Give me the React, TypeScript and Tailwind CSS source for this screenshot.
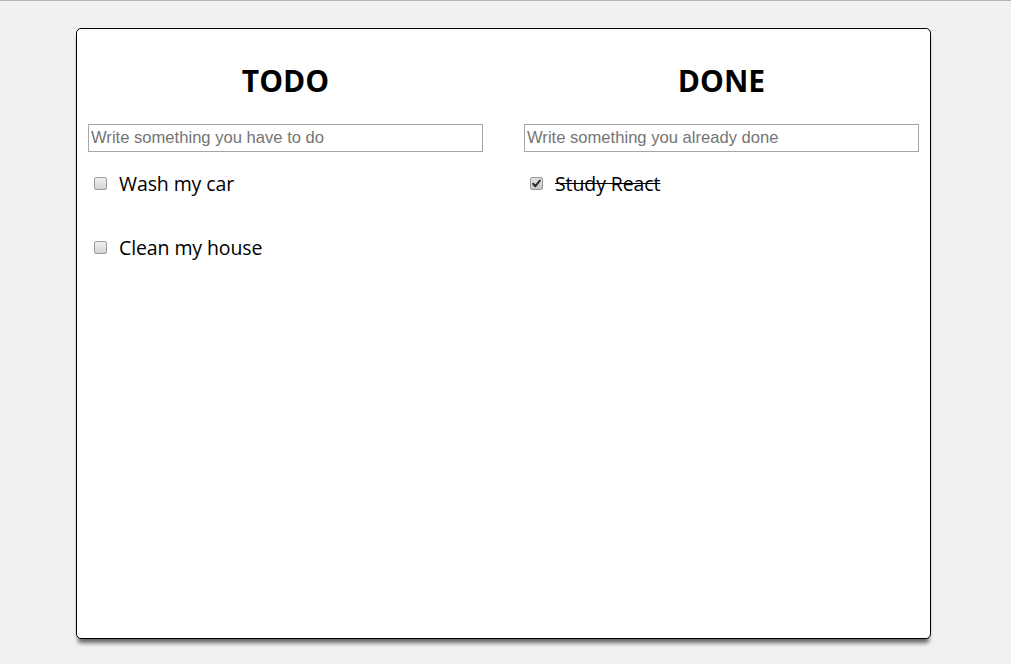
import { useState } from 'react';

type Item = { text: string; done: boolean };

function Checkbox({ checked }: { checked: boolean }) {
  return (
    <span className="relative ml-[6px] -mt-[1px] w-[13px] h-[13px] shrink-0">
      <input
        type="checkbox"
        readOnly
        checked={checked}
        className="appearance-none block w-[13px] h-[13px] rounded-[2px] border border-[#9a9a9a] bg-gradient-to-b from-[#f0f0f0] to-[#d4d4d4] checked:from-[#e2e2e2] checked:to-[#c8c8c8]"
      />
      {checked && (
        <svg
          viewBox="0 0 13 13"
          className="absolute inset-0 w-[13px] h-[13px] pointer-events-none"
        >
          <path
            d="M3.2 6.8 L5.4 9.2 L9.8 3.6"
            fill="none"
            stroke="#2b2b2b"
            strokeWidth="2"
            strokeLinecap="round"
            strokeLinejoin="round"
          />
        </svg>
      )}
    </span>
  );
}

function Column({
  title,
  placeholder,
  items,
}: {
  title: string;
  placeholder: string;
  items: Item[];
}) {
  return (
    <div className="w-[395px] flex flex-col">
      <h1 className="text-center text-[30px] leading-[36px] font-bold text-black font-['Open_Sans',sans-serif]">
        {title}
      </h1>
      <input
        type="text"
        placeholder={placeholder}
        className="mt-[25px] h-[28px] w-full border border-[#a6a6a6] px-[2px] text-[16.6px] font-['Liberation_Sans',Arial,sans-serif] placeholder:text-[#757575] outline-none"
      />
      <ul className="mt-[16px] flex flex-col gap-[32px]">
        {items.map((item) => (
          <li key={item.text} className="h-[32px] flex items-center">
            <Checkbox checked={item.done} />
            <span
              className={`ml-[12px] -mt-[1px] text-[19.5px] text-black font-['Open_Sans',sans-serif] tracking-[-0.1px] ${
                item.done ? 'line-through' : ''
              }`}
            >
              {item.text}
            </span>
          </li>
        ))}
      </ul>
    </div>
  );
}

export default function App() {
  const [todo] = useState<Item[]>([
    { text: 'Wash my car', done: false },
    { text: 'Clean my house', done: false },
  ]);
  const [done] = useState<Item[]>([{ text: 'Study React', done: true }]);

  return (
    <div className="min-h-[664px] bg-[#f2f1f0] border-t border-[#b3b3b3] pt-[27px]">
      <div className="w-[855px] h-[611px] ml-[76px] bg-white border border-black rounded-[5px] shadow-[0_6px_4px_-2px_#666]">
        <div className="flex gap-[41px] px-[11px] pt-[34px]">
          <Column
            title="TODO"
            placeholder="Write something you have to do"
            items={todo}
          />
          <Column
            title="DONE"
            placeholder="Write something you already done"
            items={done}
          />
        </div>
      </div>
    </div>
  );
}
